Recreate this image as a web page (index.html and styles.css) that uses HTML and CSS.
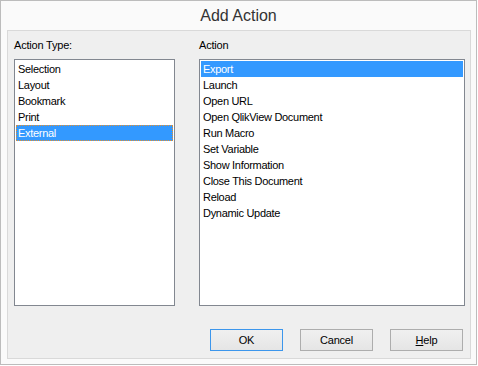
FILE: index.html
```html
<!DOCTYPE html>
<html>
<head>
<meta charset="utf-8">
<link rel="stylesheet" href="styles.css">
</head>
<body>
<div class="window">
  <div class="title">Add Action</div>
  <div class="panel">
    <div class="columns">
      <div class="col col-left">
        <div class="label">Action Type:</div>
        <ul class="list">
          <li>Selection</li>
          <li>Layout</li>
          <li>Bookmark</li>
          <li>Print</li>
          <li class="sel focus">External</li>
        </ul>
      </div>
      <div class="col col-right">
        <div class="label">Action</div>
        <ul class="list">
          <li class="sel">Export</li>
          <li>Launch</li>
          <li>Open URL</li>
          <li>Open QlikView Document</li>
          <li>Run Macro</li>
          <li>Set Variable</li>
          <li>Show Information</li>
          <li>Close This Document</li>
          <li>Reload</li>
          <li>Dynamic Update</li>
        </ul>
      </div>
    </div>
    <div class="buttons">
      <button class="btn default">OK</button>
      <button class="btn">Cancel</button>
      <button class="btn"><u>H</u>elp</button>
    </div>
  </div>
</div>
</body>
</html>
```

FILE: styles.css
```css
html, body {
  margin: 0;
  padding: 0;
  background: #ffffff;
}
body {
  font-family: "Liberation Sans", Arial, sans-serif;
  font-size: 11px;
  color: #000;
}
.window {
  box-sizing: border-box;
  width: 477px;
  height: 365px;
  border: 1px solid #bcbcbc;
  background: #fafafa;
  padding: 0 5px 5px 6px;
  display: flex;
  flex-direction: column;
}
.title {
  height: 29px;
  line-height: 29px;
  text-align: center;
  font-size: 16px;
  color: #333333;
  margin-right: 1px;
}
.panel {
  flex: 1;
  border: 1px solid #d9d9d9;
  background: #efefef;
  padding: 8px 4px 7px 6px;
  display: flex;
  flex-direction: column;
}
.columns {
  display: flex;
  gap: 24px;
}
.col {
  display: flex;
  flex-direction: column;
}
.col-left { width: 161px; }
.col-right { width: 266px; }
.label {
  line-height: 13px;
  height: 13px;
  letter-spacing: -0.2px;
  margin-bottom: 7px;
}
.list {
  box-sizing: border-box;
  list-style: none;
  margin: 0;
  padding: 1px;
  height: 247px;
  border: 1px solid #828790;
  background: #ffffff;
}
.list li {
  height: 16px;
  line-height: 16px;
  padding-left: 2px;
  letter-spacing: -0.3px;
  white-space: nowrap;
}
.list li.sel {
  background: #3399ff;
  color: #ffffff;
}
.list li.focus {
  outline: 1px dotted #e8902c;
  outline-offset: -1px;
}
.buttons {
  margin-top: 23px;
  display: flex;
  justify-content: flex-end;
  gap: 17px;
  padding-right: 3px;
}
.btn {
  box-sizing: border-box;
  width: 73px;
  height: 22px;
  margin: 0;
  padding: 0;
  border: 1px solid #adadad;
  background: linear-gradient(#f0f0f0, #e5e5e5);
  font-family: "Liberation Sans", Arial, sans-serif;
  font-size: 11px;
  color: #000;
  letter-spacing: -0.2px;
}
.btn.default {
  border-color: #3c96ec;
}
```
